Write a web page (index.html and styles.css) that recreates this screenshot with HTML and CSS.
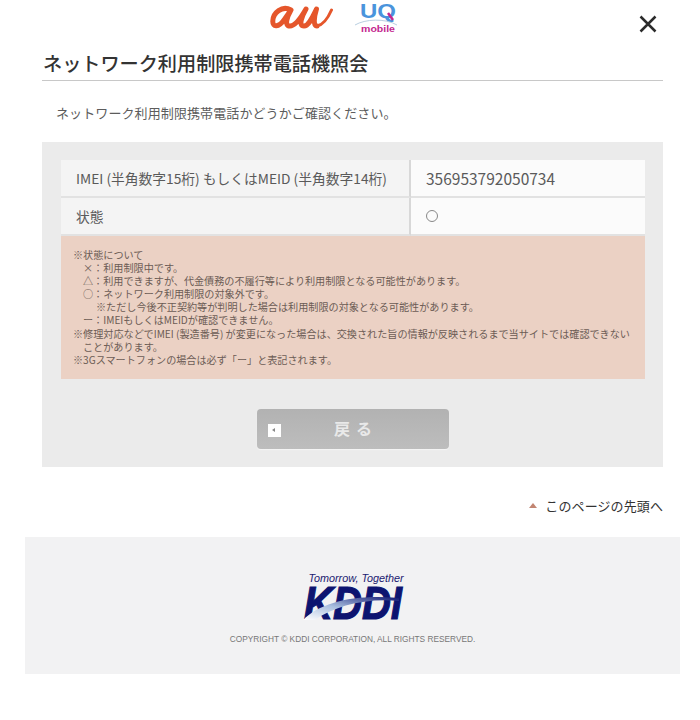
FILE: index.html
```html
<!DOCTYPE html>
<html lang="ja">
  <head>
    <meta charset="UTF-8" />
    <title>ネットワーク利用制限携帯電話機照会</title>
    <link rel="stylesheet" href="styles.css">
  </head>
  <body>
    <!-- Header -->
    <header class="site-header">
      <div class="logos">
        <svg class="logo-au" viewBox="0 0 63 26" role="img" aria-label="au">
          <path d="M21 6 C12 1 3 9 2.800 17 C2.500 24 9 23 14 16 L21 6 C17 13 14 22 20 22 C26 22 32 12 36 5 C32 12 28 22 34 22 C39 22 43 12 46.500 5 C44 13 43 22 47 22" />
          <path class="au-tail" d="M47 22 C53 21 58 14 61.500 6" />
        </svg>
        <svg class="logo-uq" viewBox="0 0 42 36" role="img" aria-label="UQ mobile">
          <text class="uq-text" x="5" y="18" textLength="36" lengthAdjust="spacingAndGlyphs">UQ</text>
          <path class="uq-arc" d="M0 25 C10 19 30 18 42 25" />
          <path class="uq-tail" d="M33 13 L38 20" />
          <text class="uq-mobile" x="6" y="32" textLength="34" lengthAdjust="spacingAndGlyphs">mobile</text>
        </svg>
      </div>
      <a href="#" class="close-btn" aria-label="閉じる">
        <svg viewBox="0 0 18 18"><path d="M1.500 1.500 L16.500 16.500 M16.500 1.500 L1.500 16.500" /></svg>
      </a>
    </header>

    <!-- Main Content -->
    <main>
      <h1 class="page-title">ネットワーク利用制限携帯電話機照会</h1>
      <p class="lead">ネットワーク利用制限携帯電話かどうかご確認ください。</p>

      <section class="result-panel">
        <div class="result-table">
          <div class="cell cell-head">IMEI (半角数字15桁) もしくはMEID (半角数字14桁)</div>
          <div class="cell cell-value">356953792050734</div>
          <div class="cell cell-head">状態</div>
          <div class="cell cell-value"><span class="mark-circle"></span></div>
        </div>
        <div class="note">
          <p>※状態について</p>
          <p class="indent-1">×：利用制限中です。</p>
          <p class="indent-1">△：利用できますが、代金債務の不履行等により利用制限となる可能性があります。</p>
          <p class="indent-1">○：ネットワーク利用制限の対象外です。</p>
          <p class="indent-2">※ただし今後不正契約等が判明した場合は利用制限の対象となる可能性があります。</p>
          <p class="indent-1">ー：IMEIもしくはMEIDが確認できません。</p>
          <p>※修理対応などでIMEI (製造番号) が変更になった場合は、交換された旨の情報が反映されるまで当サイトでは確認できない</p>
          <p class="indent-1">ことがあります。</p>
          <p>※3Gスマートフォンの場合は必ず「ー」と表記されます。</p>
        </div>
        <div class="back-row">
          <a href="#" class="back-btn">
            <span class="back-icon"></span>
            <span class="back-label">戻る</span>
          </a>
        </div>
      </section>

      <div class="page-top">
        <a href="#" class="page-top-link"><span class="arrow-up"></span>このページの先頭へ</a>
      </div>
    </main>

    <!-- Footer -->
    <footer class="site-footer">
      <div class="tagline">Tomorrow, Together</div>
      <svg class="logo-kddi" viewBox="0 0 100 34" role="img" aria-label="KDDI">
        <defs>
          <linearGradient id="globe" x1="0" y1="1" x2="1" y2="0">
            <stop offset="0" stop-color="#ffffff" />
            <stop offset="0.45" stop-color="#a9bfdf" />
            <stop offset="1" stop-color="#0d1470" />
          </linearGradient>
        </defs>
        <text class="kddi-text" x="1" y="33" textLength="98" lengthAdjust="spacingAndGlyphs">KDDI</text>
        <path d="M0 34 C18 16 52 8 96 12 L96 15 C62 12 32 20 12 34 Z" fill="url(#globe)" />
      </svg>
      <p class="copyright">COPYRIGHT © KDDI CORPORATION, ALL RIGHTS RESERVED.</p>
    </footer>
  </body>
</html>
```

FILE: styles.css
```css
/* Basic Reset & Global Styles */
* {
  margin: 0;
  padding: 0;
  box-sizing: border-box;
}
body {
  background-color: #fff;
  color: #444;
  font-family: "Noto Sans CJK JP", "Noto Sans", sans-serif;
}
a {
  color: inherit;
  text-decoration: none;
}

/* Header */
.site-header {
  position: relative;
  height: 41px;
  width: 680px;
}
.logos {
  display: flex;
  justify-content: center;
  align-items: flex-start;
  gap: 22px;
  padding-right: 13px;
}
.logo-au {
  width: 63px;
  height: 26px;
  margin-top: 4px;
  fill: none;
  stroke: #e5562b;
  stroke-width: 5;
  stroke-linecap: round;
  stroke-linejoin: round;
}
.logo-au .au-tail {
  stroke-width: 3;
}
.logo-uq {
  width: 42px;
  height: 36px;
}
.uq-text {
  font-family: "Liberation Sans", sans-serif;
  font-size: 20px;
  font-weight: 700;
  fill: #4a94dc;
}
.uq-arc {
  fill: none;
  stroke: #b9cfe0;
  stroke-width: 1;
}
.uq-tail {
  fill: none;
  stroke: #c4278f;
  stroke-width: 2.500;
}
.uq-mobile {
  font-family: "Liberation Sans", sans-serif;
  font-size: 9px;
  font-weight: 700;
  fill: #c4278f;
}
.close-btn {
  position: absolute;
  top: 15px;
  left: 639px;
  width: 18px;
  height: 18px;
}
.close-btn svg {
  display: block;
  width: 18px;
  height: 18px;
  fill: none;
  stroke: #2b2b2b;
  stroke-width: 2.500;
}

/* Main Content */
main {
  width: 621px;
  margin-left: 42px;
}
.page-title {
  height: 40px;
  padding: 8px 0 0 1px;
  font-size: 19.150px;
  font-weight: 500;
  line-height: 28px;
  color: #333;
  border-bottom: 1px solid #c8c8c8;
}
.lead {
  padding: 22px 0 0 14px;
  height: 61px;
  font-size: 13px;
  line-height: 19px;
  letter-spacing: 0.1px;
  color: #5c5c5c;
}

/* Result Panel */
.result-panel {
  background-color: #ebebeb;
  padding: 18px 18px 18px 19px;
}
.result-table {
  display: grid;
  grid-template-columns: 350px 234px;
  grid-auto-rows: 38px;
}
.cell {
  display: flex;
  align-items: center;
  padding-left: 15px;
  border-bottom: 2px solid #e2e2e2;
  font-size: 13.750px;
  color: #5a5a5a;
}
.cell-head {
  background-color: #f4f4f4;
  border-right: 2px solid #d8d8d8;
}
.cell-value {
  background-color: #fbfbfb;
  font-size: 15.500px;
}
.mark-circle {
  width: 12px;
  height: 12px;
  border: 1px solid #888;
  border-radius: 50%;
}
.note {
  height: 143px;
  padding: 12px 12px 0;
  background-color: #ebd1c4;
  font-size: 10.120px;
  line-height: 13.100px;
  color: #6b5c55;
  white-space: nowrap;
}
.indent-1 {
  padding-left: 10px;
}
.indent-2 {
  padding-left: 23px;
}
.back-row {
  display: flex;
  justify-content: flex-start;
  padding: 30px 0 0 196px;
}
.back-btn {
  position: relative;
  display: flex;
  justify-content: center;
  align-items: center;
  width: 192px;
  height: 40px;
  border-radius: 4px;
  background: linear-gradient(#b2b2b2, #bdbdbd);
  box-shadow: 0 1px 1px #f6f6f6;
}
.back-icon {
  position: absolute;
  top: 15px;
  left: 11px;
  width: 13px;
  height: 13px;
  background-color: #fff;
}
.back-icon::after {
  content: "";
  position: absolute;
  top: 4px;
  left: 4px;
  border-top: 2.500px solid transparent;
  border-bottom: 2.500px solid transparent;
  border-right: 3px solid #888;
}
.back-label {
  margin: 0 0 3px 6px;
  font-size: 16px;
  font-weight: 700;
  letter-spacing: 6px;
  color: #e9e9e9;
}

/* Page Top Link */
.page-top {
  display: flex;
  justify-content: flex-end;
  padding-top: 28px;
  height: 70px;
}
.page-top-link {
  display: flex;
  align-items: center;
  height: 20px;
  font-size: 13px;
  letter-spacing: 0.1px;
  color: #333;
}
.arrow-up {
  margin-right: 8px;
  border-left: 4.500px solid transparent;
  border-right: 4.500px solid transparent;
  border-bottom: 5px solid #c28572;
}

/* Footer */
.site-footer {
  display: flex;
  flex-direction: column;
  align-items: center;
  width: 655px;
  height: 137px;
  margin-left: 25px;
  padding-top: 33px;
  background-color: #f2f2f3;
}
.tagline {
  height: 16px;
  margin-left: 7px;
  font-family: "Liberation Sans", sans-serif;
  font-size: 10.800px;
  font-style: italic;
  line-height: 16px;
  color: #1b2070;
}
.logo-kddi {
  display: block;
  width: 100px;
  height: 34px;
  overflow: visible;
}
.kddi-text {
  font-family: "Liberation Sans", sans-serif;
  font-size: 47px;
  font-weight: 700;
  font-style: italic;
  fill: #0d1470;
  stroke: #0d1470;
  stroke-width: 1.200;
}
.copyright {
  margin-top: 12px;
  font-family: "Liberation Sans", sans-serif;
  font-size: 8.300px;
  line-height: 14px;
  color: #777;
}
```
